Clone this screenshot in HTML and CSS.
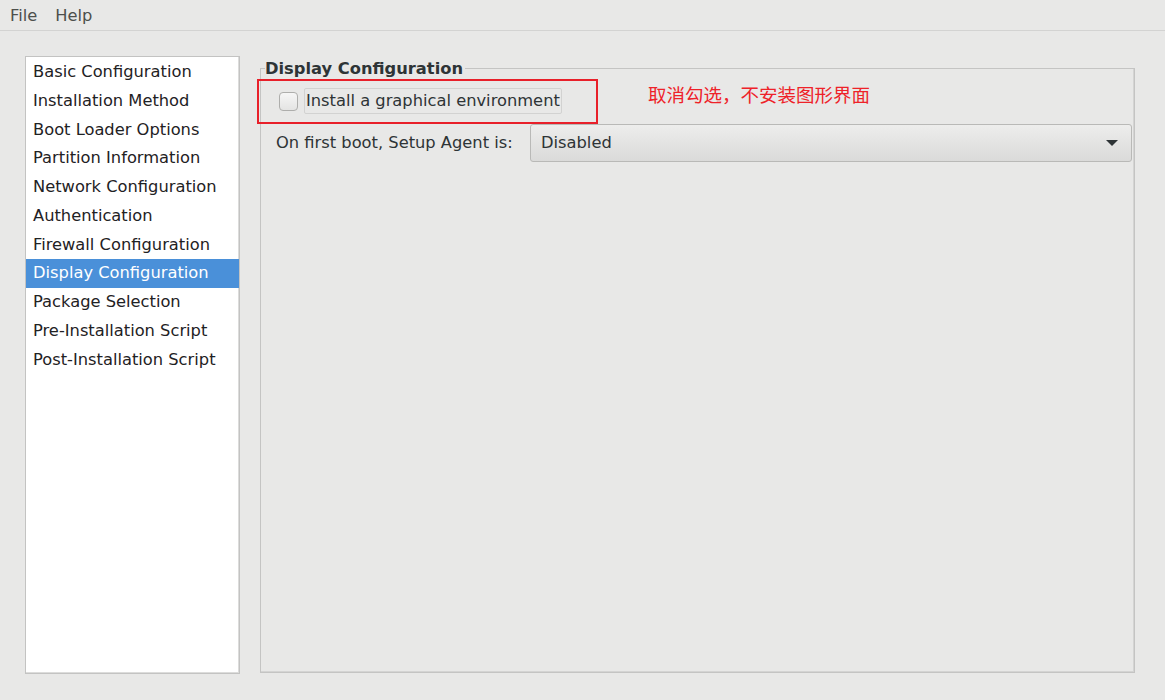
FILE: index.html
```html
<!DOCTYPE html>
<html>
<head>
<meta charset="utf-8">
<link rel="stylesheet" href="styles.css">
</head>
<body>
<div class="menubar">
  <span class="menu-item">File</span>
  <span class="menu-item">Help</span>
</div>
<div class="main">
  <ul class="sidebar">
    <li>Basic Configuration</li>
    <li>Installation Method</li>
    <li>Boot Loader Options</li>
    <li>Partition Information</li>
    <li>Network Configuration</li>
    <li>Authentication</li>
    <li>Firewall Configuration</li>
    <li class="selected">Display Configuration</li>
    <li>Package Selection</li>
    <li>Pre-Installation Script</li>
    <li>Post-Installation Script</li>
  </ul>
  <fieldset class="frame">
    <legend class="frame-title">Display Configuration</legend>
    <div class="frame-body">
      <div class="check-row">
        <span class="checkbox"></span>
        <span class="check-label">Install a graphical environment</span>
      </div>
      <div class="agent-row">
        <span class="agent-label">On first boot, Setup Agent is:</span>
        <div class="combo">
          <span class="combo-text">Disabled</span>
          <span class="combo-arrow"></span>
        </div>
      </div>
    </div>
    <div class="annot-box"></div>
    <div class="annot-text">取消勾选，不安装图形界面</div>
  </fieldset>
</div>
</body>
</html>
```

FILE: styles.css
```css
html, body {
  margin: 0;
  padding: 0;
}
body {
  width: 1165px;
  height: 700px;
  background: #e8e8e7;
  font-family: "DejaVu Sans", sans-serif;
  font-size: 16.3px;
  color: #2e3436;
  overflow: hidden;
}
.menubar {
  height: 31px;
  border-bottom: 1px solid #d3d3d2;
  display: flex;
  align-items: center;
  padding: 2px 0 0 1px;
  box-sizing: border-box;
}
.menu-item {
  padding: 0 9px;
  color: #4d4f4c;
  line-height: 28px;
}
.main {
  display: flex;
  height: 669px;
  box-sizing: border-box;
  padding: 25px 30px 26px 25px;
  gap: 20px;
}
.sidebar {
  list-style: none;
  margin: 0;
  padding: 1px 0 0 0;
  width: 215px;
  box-sizing: border-box;
  background: #ffffff;
  border: 1px solid #c3c3c2;
  box-shadow: inset -1px -1px 0 #dcdcdb;
  flex: none;
}
.sidebar li {
  height: 28.75px;
  line-height: 28.75px;
  padding-left: 7px;
  color: #1f2224;
  white-space: nowrap;
}
.sidebar li.selected {
  background: #4a90d9;
  color: #ffffff;
}
.frame {
  position: relative;
  flex: 1;
  margin: 3px 0 1px 0;
  padding: 0;
  border: 1px solid #c4c4c3;
  box-shadow: inset -1px -1px 0 #d4d4d3;
  min-width: 0;
}
.frame-title {
  font-weight: bold;
  margin-left: 4px;
  padding: 0 2px 0 0;
  line-height: 19px;
  color: #2e3436;
}
.frame-body {
  padding: 10px 2px 0 15px;
}
.check-row {
  display: flex;
  align-items: center;
  margin-left: 3px;
  height: 26px;
}
.checkbox {
  width: 17px;
  height: 17px;
  border: 1px solid #aeaeac;
  border-radius: 4px;
  background: linear-gradient(#f6f6f6, #e4e4e3);
  margin-right: 6px;
}
.check-label {
  border: 1px solid #d2d2d1;
  border-radius: 2px;
  box-sizing: border-box;
  height: 26px;
  line-height: 24px;
  padding: 0 1px;
}
.agent-row {
  display: flex;
  align-items: center;
  margin-top: 10px;
}
.agent-label {
  width: 254px;
  flex: none;
  white-space: nowrap;
  padding-bottom: 1px;
}
.combo {
  flex: 1;
  height: 38px;
  box-sizing: border-box;
  border: 1px solid #b9b9b7;
  border-radius: 3px;
  background: linear-gradient(#ededec, #dadad9);
  display: flex;
  align-items: center;
  justify-content: space-between;
  padding: 0 13px 1px 10px;
}
.combo-arrow {
  width: 0;
  height: 0;
  border-left: 6px solid transparent;
  border-right: 6px solid transparent;
  border-top: 6px solid #2e3436;
  margin-top: 1px;
}
.annot-box {
  position: absolute;
  left: -4px;
  top: 1px;
  width: 337px;
  height: 41px;
  border: 2px solid #e8202a;
}
.annot-text {
  position: absolute;
  left: 387px;
  top: 3px;
  font-family: "Noto Sans CJK SC", sans-serif;
  font-size: 18.5px;
  line-height: 26px;
  color: #ee2229;
}
```
